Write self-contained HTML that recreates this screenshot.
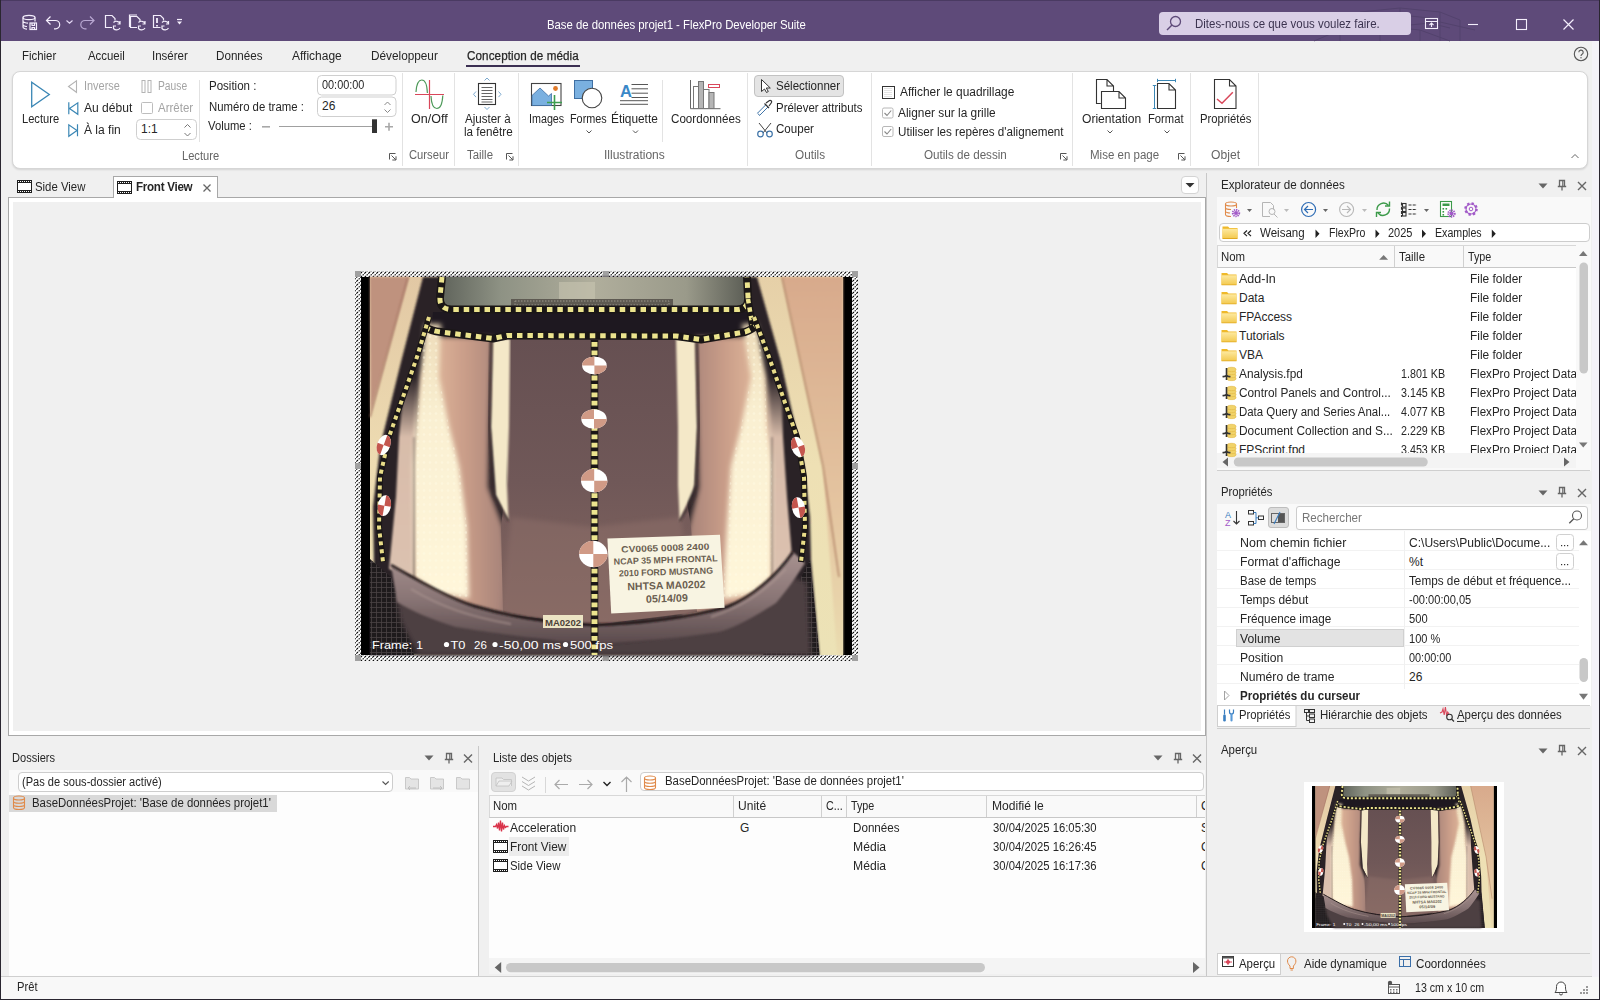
<!DOCTYPE html>
<html><head><meta charset="utf-8">
<style>
*{box-sizing:border-box;margin:0;padding:0}
html,body{width:1600px;height:1000px;overflow:hidden;background:#f0f0f0;font-family:"Liberation Sans",sans-serif;font-size:12px;color:#262626}
.a{position:absolute}
.t{position:absolute;white-space:nowrap;line-height:14px}
.g{color:#9a9a9a}
svg{position:absolute;overflow:visible}
</style></head><body>
<!-- window borders -->
<div class="a" style="left:0;top:0;width:1600px;height:41px;background:#5e4a79"></div>
<div class="a" style="left:0;top:0;width:1600px;height:1px;background:#4a3a62"></div>
<div class="a" style="left:0;top:0;width:1px;height:1000px;background:#2a2630"></div>
<div class="a" style="left:1599px;top:0;width:1px;height:1000px;background:#2a2630"></div>
<div class="a" style="left:0;top:999px;width:1600px;height:1px;background:#2a2630"></div>

<!-- TITLE BAR -->

<svg style="left:0;top:0" width="200" height="40">
 <g fill="none" stroke="#f4eefc" stroke-width="1.2">
  <!-- db save -->
  <ellipse cx="29" cy="17.5" rx="6" ry="2.2"/>
  <path d="M23 17.5v9.5c0 1.2 2.5 2.2 4 2.2M35 17.5v4M23 21c0 1.2 2.7 2.2 5 2.2M23 24.5c0 1.2 2.5 2 4 2"/>
  <rect x="30" y="23" width="6.5" height="6.5"/>
  <path d="M32 23v2.5h2.5V23M32 29.5v-2h2.5v2"/>
  <!-- undo -->
  <path d="M46.5 20.5h9a4.2 4.2 0 0 1 0 8.4h-1.5M50.5 16.5l-4 4 4 4"/>
  <path d="M66.5 20.5l3 2.6 3-2.6" stroke="#e4d8f4"/>
  <!-- redo -->
  <path d="M94 20.5h-9a4.2 4.2 0 0 0 0 8.4h1.5M90 16.5l4 4-4 4" stroke="#b9a8d2"/>
  <!-- sync docs -->
  <path d="M112 27.5h-6.5V15.5h6.5l3 3v2"/>
  <path d="M113.5 22.5a4 4 0 0 1 6.5 1M120 28a4 4 0 0 1-6.5 0.5M120 21v3h-2.5M113.5 29v-3h2.5"/>
  <path d="M137 27.5h-6.5V16.5h6.5l3 3v2M129.5 27v-12h7.5"/>
  <path d="M138.5 22.5a4 4 0 0 1 6.5 1M145 28a4 4 0 0 1-6.5 0.5M145 21v3h-2.5M138.5 29v-3h2.5"/>
  <path d="M160.5 27.5h-7V15.5h7l3 3v2"/>
  <path d="M157 18v5M157 25v1.5" stroke-width="1.8"/>
  <path d="M162 22.5a4 4 0 0 1 6.5 1M168.5 28a4 4 0 0 1-6.5 0.5M168.5 21v3h-2.5M162 29v-3h2.5"/>
  <path d="M177 19.5h5"/>
 </g>
 <path d="M177 21.5h5l-2.5 3z" fill="#f4eefc"/>
</svg>
<div class="t" style="left:547px;top:18px;color:#fff;font-size:12px;letter-spacing:-0.02px;transform:scaleX(0.947);transform-origin:0 0">Base de données projet1 - FlexPro Developer Suite</div>
<svg style="left:1300px;top:0" width="180" height="41"><g fill="none" stroke="#50406a" stroke-width="1" opacity="0.8">
 <path d="M14 41L40 30L80 26L120 30L150 41M40 30V41M80 26V41M120 30V41M60 12L100 8L140 12L160 20M100 8V26M140 12V41M160 20V41M100 26L140 22L175 30M125 22L150 28"/>
 <path d="M70 12V26M110 16L130 18"/></g></svg>
<div class="a" style="left:1159px;top:12px;width:252px;height:23px;background:#d9cfe6;border-radius:4px"></div>
<svg style="left:1159px;top:12px" width="252" height="23">
 <circle cx="16.5" cy="9.5" r="5" fill="none" stroke="#5e4a79" stroke-width="1.3"/>
 <path d="M13 13l-5 5" stroke="#5e4a79" stroke-width="1.5"/>
</svg>
<div class="t" style="left:1195px;top:17px;color:#3c3450;font-size:12px;transform:scaleX(0.955);transform-origin:0 0">Dites-nous ce que vous voulez faire.</div>
<svg style="left:1420px;top:10px" width="180" height="28">
 <g fill="none" stroke="#f4eefc" stroke-width="1.1">
  <rect x="5.5" y="8.5" width="12" height="10"/>
  <path d="M5.5 11.5h12M11.5 17v-4M9.5 15l2-2 2 2"/>
  <path d="M48 14.5h10"/>
  <rect x="96.5" y="9.5" width="10" height="10"/>
  <path d="M143.5 9.5l10 10M153.5 9.5l-10 10" stroke-width="1.2"/>
 </g>
</svg>


<!-- MENU -->

<div class="t" style="left:22px;top:49px;transform:scaleX(0.952);transform-origin:0 0">Fichier</div>
<div class="t" style="left:88px;top:49px;transform:scaleX(0.951);transform-origin:0 0">Accueil</div>
<div class="t" style="left:152px;top:49px;transform:scaleX(0.958);transform-origin:0 0">Insérer</div>
<div class="t" style="left:216px;top:49px;transform:scaleX(0.970);transform-origin:0 0">Données</div>
<div class="t" style="left:292px;top:49px;transform:scaleX(0.999);transform-origin:0 0">Affichage</div>
<div class="t" style="left:371px;top:49px;transform:scaleX(0.982);transform-origin:0 0">Développeur</div>
<div class="t" style="left:467px;top:49px;letter-spacing:0.1px;-webkit-text-stroke:0.25px #262626;transform:scaleX(0.970);transform-origin:0 0">Conception de média</div>
<div class="a" style="left:466px;top:65px;width:114px;height:2px;background:#3b2f52"></div>
<svg style="left:1570px;top:44px" width="24" height="22"><circle cx="11" cy="10" r="6.7" fill="none" stroke="#555" stroke-width="1.1"/><path d="M8.8 8.3a2.2 2.2 0 1 1 3.3 1.9c-0.8 0.5-1.1 0.9-1.1 1.8" fill="none" stroke="#555" stroke-width="1.1"/><circle cx="11" cy="13.8" r="0.7" fill="#555"/></svg>


<!-- RIBBON -->
<div class="a" style="left:12px;top:71px;width:1576px;height:98px;background:#fff;border:1px solid #d6d6d6;border-radius:8px;box-shadow:0 1px 2px rgba(0,0,0,0.12)"></div>

<!-- Lecture group -->
<svg style="left:0;top:72px" width="410" height="95">
 <path d="M31.7 10.3v24.4L49.3 22.5z" fill="none" stroke="#3b87b5" stroke-width="1.3" stroke-linejoin="miter"/>
 <path d="M76.5 8.8v11.5L68.5 14.5z" fill="none" stroke="#b4b4b4" stroke-width="1.1"/>
 <path d="M68.8 30.3v12M77.8 30.8v11.5L69.5 36.5z" fill="none" stroke="#3b87b5" stroke-width="1.2"/>
 <path d="M77.5 52.3v12M68.8 52.8v11.5L77 58.5z" fill="none" stroke="#3b87b5" stroke-width="1.2"/>
 <rect x="142" y="8.5" width="3" height="12" fill="none" stroke="#b4b4b4" stroke-width="1"/>
 <rect x="148" y="8.5" width="3" height="12" fill="none" stroke="#b4b4b4" stroke-width="1"/>
 <rect x="141.5" y="30.5" width="11" height="11" rx="1" fill="none" stroke="#bdbdbd" stroke-width="1"/>
 <rect x="136.5" y="47.5" width="60" height="20" rx="4" fill="#fff" stroke="#cfcfcf" stroke-width="1"/>
 <path d="M184.5 55.5l3-3 3 3M184.5 61l3 3 3-3" fill="none" stroke="#777" stroke-width="1"/>
 <path d="M199.5 8v62" stroke="#e2e2e2"/>
 <rect x="317.5" y="3.5" width="78.5" height="19.5" rx="4" fill="#fff" stroke="#cfcfcf" stroke-width="1"/>
 <rect x="317.5" y="25" width="78.5" height="19.5" rx="4" fill="#fff" stroke="#cfcfcf" stroke-width="1"/>
 <path d="M384.5 33l3-3 3 3M384.5 37.5l3 3 3-3" fill="none" stroke="#888" stroke-width="1"/>
 <path d="M262 54.8h8" stroke="#a8a8a8" stroke-width="1.6"/>
 <path d="M279 54.5h93" stroke="#a0a0a0" stroke-width="1"/>
 <rect x="372" y="47.3" width="5" height="13.7" fill="#333"/>
 <path d="M385 54.8h8M389 50.8v8" stroke="#a8a8a8" stroke-width="1.6"/>
 <path d="M389.5 87.5V81.5H395.5M391.5 83.5L395.8 87.8M396 84.3V88H392.3" fill="none" stroke="#555" stroke-width="1"/>
 <path d="M402.5 1v93" stroke="#e2e2e2"/>
</svg>
<div class="t" style="left:22px;top:112px;transform:scaleX(0.927);transform-origin:0 0">Lecture</div>
<div class="t g" style="left:84px;top:79px;color:#a4a4a4;transform:scaleX(0.910);transform-origin:0 0">Inverse</div>
<div class="t" style="left:84px;top:101px;transform:scaleX(1.005);transform-origin:0 0">Au début</div>
<div class="t" style="left:84px;top:123px;transform:scaleX(1.003);transform-origin:0 0">À la fin</div>
<div class="t" style="left:158px;top:79px;color:#a4a4a4;transform:scaleX(0.855);transform-origin:0 0">Pause</div>
<div class="t" style="left:158px;top:101px;color:#a4a4a4;transform:scaleX(0.957);transform-origin:0 0">Arrêter</div>
<div class="t" style="left:141px;top:122px">1:1</div>
<div class="t" style="left:209px;top:79px;transform:scaleX(0.960);transform-origin:0 0">Position :</div>
<div class="t" style="left:209px;top:100px;transform:scaleX(0.948);transform-origin:0 0">Numéro de trame :</div>
<div class="t" style="left:208px;top:119px;transform:scaleX(0.938);transform-origin:0 0">Volume :</div>
<div class="t" style="left:322px;top:78px;transform:scaleX(0.908);transform-origin:0 0">00:00:00</div>
<div class="t" style="left:322px;top:99px">26</div>
<div class="t" style="left:182px;top:149px;color:#666;transform:scaleX(0.927);transform-origin:0 0">Lecture</div>

<svg style="left:0;top:0" width="1600" height="170">
 <g stroke="#e3e3e3" stroke-width="1">
  <path d="M454.5 73v93M518.5 73v93M747.5 73v93M871.5 73v93M1072.5 73v93M1190.5 73v93M1258.5 73v93"/>
  <path d="M662.5 80v62"/>
 </g>
 <!-- On/Off -->
 <path d="M416 92c0.5-8 3-12 5.8-12s5.2 4 5.6 13M431 96c0.4 8 2.8 12.5 5.8 12.5s5.5-4 6-13" fill="none" stroke="#4e9a5a" stroke-width="1.2"/>
 <path d="M415 94.5h29M429.5 80v29" stroke="#d9475a" stroke-width="1.2"/>
 <!-- Ajuster -->
 <rect x="478.5" y="83.5" width="17" height="21" fill="#fff" stroke="#333" stroke-width="1.1"/>
 <path d="M481.5 87.5h11M481.5 90.5h11M481.5 93.5h11M481.5 96.5h11M481.5 99.5h11M481.5 102h11" stroke="#555" stroke-width="0.9"/>
 <path d="M484.5 80.5l2.5-2.5 2.5 2.5M484.5 107l2.5 2.5 2.5-2.5M476 91.5l-2.5 2.8 2.5 2.8M498.5 91.5l2.5 2.8-2.5 2.8" fill="none" stroke="#6d9fc8" stroke-width="0.9"/>
 <path d="M506.5 159.5V153.5H512.5M508.5 155.5L512.8 159.8M513 156.3V160H509.3" fill="none" stroke="#555" stroke-width="1"/>
 <!-- Images -->
 <rect x="531.5" y="83.5" width="29.5" height="22" fill="#fff" stroke="#444" stroke-width="1.1"/>
 <path d="M532 105.5v-10l8-7.5 8.5 8 3-2.5v12z" fill="#7ab0e0" stroke="#3f6fa3" stroke-width="0.8"/>
 <circle cx="555.5" cy="88.5" r="2.4" fill="#e07a2a"/>
 <path d="M554.5 95v15M547 102.5h15" stroke="#3e9e4f" stroke-width="1.6"/>
 <!-- Formes -->
 <rect x="574.5" y="80.5" width="18" height="18" fill="#7ab0e0" stroke="#3f6fa3" stroke-width="1"/>
 <circle cx="592" cy="98" r="9.8" fill="#fff" stroke="#444" stroke-width="1.1"/>
 <path d="M586.5 130.5l2.5 2.5 2.5-2.5M633 130.5l2.5 2.5 2.5-2.5M1107.5 130.5l2.5 2.5 2.5-2.5M1164.5 130.5l2.5 2.5 2.5-2.5" fill="none" stroke="#555" stroke-width="1"/>
 <!-- Etiquette -->
 <text x="620" y="96.5" font-family="Liberation Sans" font-size="16.5" font-weight="bold" fill="#3a88c8">A</text>
 <path d="M631.5 84.5h16.5M631.5 88.8h16.5M631.5 93.2h16.5M631.5 97.5h16.5M620 100.7h28M620 104.3h28" stroke="#444" stroke-width="0.9"/>
 <!-- Coordonnees -->
 <path d="M690.5 80v28.7h30" fill="none" stroke="#666" stroke-width="1"/>
 <rect x="693.5" y="86.5" width="5" height="22" fill="#fff" stroke="#777" stroke-width="1"/>
 <rect x="698.5" y="81.5" width="5" height="27" fill="#b5b5b5" stroke="#777" stroke-width="1"/>
 <rect x="703.5" y="89.5" width="5.5" height="19" fill="#fff" stroke="#777" stroke-width="1"/>
 <rect x="709" y="92.5" width="5" height="16" fill="#b5b5b5" stroke="#777" stroke-width="1"/>
 <rect x="708.5" y="84.5" width="11" height="3" fill="#fff" stroke="#d9475a" stroke-width="1"/>
 <!-- Selectionner -->
 <rect x="754.5" y="75.5" width="89" height="21" rx="3.5" fill="#e4e4e4" stroke="#c2c2c2" stroke-width="1"/>
 <path d="M761.5 79.5v12l3-2.5 2 3.5 1.8-1-2-3.5h4z" fill="#fff" stroke="#333" stroke-width="1" stroke-linejoin="round"/>
 <!-- pipette -->
 <path d="M758.5 114l1 1.5 8.5-8.5-2.2-2.2-8.3 8.4z" fill="#fff" stroke="#3f74a8" stroke-width="1"/>
 <path d="M764.5 103.5l4.5 4.5M766 103l3.5-2.5c1.2-0.6 2.6 0.6 2 2l-2.5 3.5" fill="none" stroke="#333" stroke-width="1.2"/>
 <!-- scissors -->
 <path d="M759 123l8 10M771 123l-8 10" stroke="#444" stroke-width="1"/>
 <circle cx="760.5" cy="134" r="2.8" fill="none" stroke="#3f74a8" stroke-width="1.2"/>
 <circle cx="769.5" cy="134" r="2.8" fill="none" stroke="#3f74a8" stroke-width="1.2"/>
 <!-- grid icon -->
 <rect x="882.5" y="86.5" width="12" height="12" fill="#fff" stroke="#333" stroke-width="1"/>
 <path d="M884.5 88.5h8M884.5 90.5h8M884.5 92.5h8M884.5 94.5h8M884.5 96.5h8" stroke="#bbb" stroke-width="0.8" stroke-dasharray="1 1"/>
 <rect x="882.5" y="108" width="10.5" height="10" rx="1.5" fill="#fff" stroke="#b8b8b8" stroke-width="1"/>
 <path d="M884.5 113l2.5 2.5 4.2-5" fill="none" stroke="#888" stroke-width="1.1"/>
 <rect x="882.5" y="126.5" width="10.5" height="10" rx="1.5" fill="#fff" stroke="#b8b8b8" stroke-width="1"/>
 <path d="M884.5 131.5l2.5 2.5 4.2-5" fill="none" stroke="#888" stroke-width="1.1"/>
 <path d="M1060.5 159.5V153.5H1066.5M1062.5 155.5L1066.8 159.8M1067 156.3V160H1063.3" fill="none" stroke="#555" stroke-width="1"/>
 <path d="M1178.5 159.5V153.5H1184.5M1180.5 155.5L1184.8 159.8M1185 156.3V160H1181.3" fill="none" stroke="#555" stroke-width="1"/>
 <!-- Orientation -->
 <path d="M1100.8 103.5h-4.3V79.5h10.5l6.5 6.5v5.5M1107 79.5v6.5h6.5" fill="none" stroke="#333" stroke-width="1.1"/>
 <path d="M1101.5 91.5h17.5l6.5 6.5v10.5h-24z M1119 91.5v6.5h6.5" fill="#fff" stroke="#333" stroke-width="1.1"/>
 <!-- Format -->
 <path d="M1157.5 83.5h11.5l6.5 6.5v18.5h-18z M1169 83.5v6.5h6.5" fill="#fff" stroke="#333" stroke-width="1.1"/>
 <path d="M1157 80.5h19M1157.5 78.8v3.4M1175.5 78.8v3.4M1154.5 85.5v23M1152.8 85.5h3.4M1152.8 108.5h3.4" fill="none" stroke="#3b87b5" stroke-width="1"/>
 <!-- Proprietes -->
 <path d="M1214.5 79.5h15l6.5 6.5v22.5h-21.5z M1229.5 79.5v6.5h6.5" fill="#fff" stroke="#333" stroke-width="1.1"/>
 <path d="M1217 99l5 4.3 10.8-11" fill="none" stroke="#d9475a" stroke-width="1.5"/>
 <path d="M1571.5 158l3.5-3.5 3.5 3.5" fill="none" stroke="#666" stroke-width="1"/>
</svg>
<div class="t" style="left:411px;top:112px;transform:scaleX(1.042);transform-origin:0 0">On/Off</div>
<div class="t" style="left:409px;top:148px;color:#666;transform:scaleX(0.935);transform-origin:0 0">Curseur</div>
<div class="t" style="left:465px;top:112px;transform:scaleX(0.963);transform-origin:0 0">Ajuster à</div>
<div class="t" style="left:464px;top:125px;transform:scaleX(0.973);transform-origin:0 0">la fenêtre</div>
<div class="t" style="left:467px;top:148px;color:#666;transform:scaleX(0.950);transform-origin:0 0">Taille</div>
<div class="t" style="left:529px;top:112px;transform:scaleX(0.894);transform-origin:0 0">Images</div>
<div class="t" style="left:570px;top:112px;transform:scaleX(0.902);transform-origin:0 0">Formes</div>
<div class="t" style="left:611px;top:112px;transform:scaleX(0.988);transform-origin:0 0">Étiquette</div>
<div class="t" style="left:671px;top:112px;transform:scaleX(0.969);transform-origin:0 0">Coordonnées</div>
<div class="t" style="left:604px;top:148px;color:#666;transform:scaleX(1.002);transform-origin:0 0">Illustrations</div>
<div class="t" style="left:776px;top:79px;transform:scaleX(0.961);transform-origin:0 0">Sélectionner</div>
<div class="t" style="left:776px;top:101px;transform:scaleX(0.953);transform-origin:0 0">Prélever attributs</div>
<div class="t" style="left:776px;top:122px;transform:scaleX(0.965);transform-origin:0 0">Couper</div>
<div class="t" style="left:795px;top:148px;color:#666;transform:scaleX(0.978);transform-origin:0 0">Outils</div>
<div class="t" style="left:900px;top:85px;transform:scaleX(0.992);transform-origin:0 0">Afficher le quadrillage</div>
<div class="t" style="left:898px;top:106px;transform:scaleX(0.989);transform-origin:0 0">Aligner sur la grille</div>
<div class="t" style="left:898px;top:125px;transform:scaleX(0.972);transform-origin:0 0">Utiliser les repères d'alignement</div>
<div class="t" style="left:924px;top:148px;color:#666;transform:scaleX(0.970);transform-origin:0 0">Outils de dessin</div>
<div class="t" style="left:1082px;top:112px;transform:scaleX(1.007);transform-origin:0 0">Orientation</div>
<div class="t" style="left:1148px;top:112px;transform:scaleX(0.934);transform-origin:0 0">Format</div>
<div class="t" style="left:1090px;top:148px;color:#666;transform:scaleX(0.959);transform-origin:0 0">Mise en page</div>
<div class="t" style="left:1200px;top:112px;transform:scaleX(0.940);transform-origin:0 0">Propriétés</div>
<div class="t" style="left:1211px;top:148px;color:#666;transform:scaleX(1.011);transform-origin:0 0">Objet</div>


<!-- DOC TABS + AREA -->

<!-- tab strip -->
<div class="a" style="left:8px;top:197px;width:1198px;height:539px;background:#f0f0f0;border:1px solid #a8a8a8"></div>
<div class="a" style="left:9px;top:198px;width:1196px;height:537px;border:4px solid #fff"></div>
<div class="a" style="left:113px;top:176px;width:105px;height:22px;background:#fff;border:1px solid #a8a8a8;border-bottom:none"></div>
<svg style="left:0;top:170px" width="240" height="30">
 <g><use href="#film" x="17" y="10"/><use href="#film" x="117" y="11"/></g>
 <path d="M203.5 14.5l7 7M210.5 14.5l-7 7" stroke="#666" stroke-width="1.3"/>
</svg>
<div class="t" style="left:35px;top:180px;transform:scaleX(0.948);transform-origin:0 0">Side View</div>
<div class="t" style="left:136px;top:180px;font-weight:bold;letter-spacing:-0.3px;transform:scaleX(0.969);transform-origin:0 0">Front View</div>
<div class="a" style="left:1181px;top:176px;width:18px;height:18px;background:#fff;border:1px solid #d4d4d4;border-radius:4px"></div>
<svg style="left:1181px;top:176px" width="18" height="18"><path d="M4.5 7h9l-4.5 4.5z" fill="#333"/></svg>
<div class="a" style="left:1206px;top:173px;width:1px;height:804px;background:#c8c8c8"></div>

<!-- selection frame -->
<svg style="left:355px;top:271px" width="504" height="391">
 <defs>
  <pattern id="hatch" patternUnits="userSpaceOnUse" width="4" height="4">
   <rect width="4" height="4" fill="#fff"/>
   <path d="M-1 5L5 -1M3 5L5 3M-1 1L1 -1" stroke="#000" stroke-width="1.1" stroke-dasharray="2.4 0.9"/>
  </pattern>
 </defs>
 <rect x="0" y="0" width="503" height="390" fill="url(#hatch)"/>
 <g fill="#a0a0a0">
  <rect x="0" y="0" width="6" height="6"/><rect x="248" y="0" width="6" height="6"/><rect x="497" y="0" width="6" height="6"/>
  <rect x="0" y="192" width="6" height="6"/><rect x="497" y="192" width="6" height="6"/>
  <rect x="0" y="384" width="6" height="6"/><rect x="248" y="384" width="6" height="6"/><rect x="497" y="384" width="6" height="6"/>
 </g>
</svg>
<svg style="left:361px;top:277px" width="491" height="378" viewBox="361 277 491 378">
  <defs>
  <linearGradient id="flL" x1="0" y1="0" x2="0" y2="1"><stop offset="0" stop-color="#e2c8a4"/><stop offset="0.5" stop-color="#eedcb2"/><stop offset="1" stop-color="#f0e4b6"/></linearGradient>
  <linearGradient id="flR" x1="0" y1="0" x2="0" y2="1"><stop offset="0" stop-color="#e6d0a8"/><stop offset="0.5" stop-color="#eee0b4"/><stop offset="1" stop-color="#ece2b6"/></linearGradient>
  <linearGradient id="flRp" x1="0" y1="0" x2="0" y2="1"><stop offset="0" stop-color="#d8aa8c"/><stop offset="0.6" stop-color="#e4c4a0"/><stop offset="1" stop-color="#eadcb0"/></linearGradient>
  <linearGradient id="ws" x1="0" y1="0" x2="1" y2="0"><stop offset="0" stop-color="#5e625a"/><stop offset="0.2" stop-color="#8e9284"/><stop offset="0.5" stop-color="#b0ae9c"/><stop offset="0.8" stop-color="#9a9a8a"/><stop offset="1" stop-color="#5a5c54"/></linearGradient>
  <linearGradient id="hood" x1="0" y1="0" x2="0" y2="1"><stop offset="0" stop-color="#665052"/><stop offset="0.5" stop-color="#705858"/><stop offset="1" stop-color="#846660"/></linearGradient>
  <linearGradient id="pkL" x1="0" y1="0" x2="1" y2="0"><stop offset="0" stop-color="#ecc4a4"/><stop offset="0.55" stop-color="#c89c88"/><stop offset="1" stop-color="#a07e76"/></linearGradient>
  <linearGradient id="pkR" x1="1" y1="0" x2="0" y2="0"><stop offset="0" stop-color="#ecc4a4"/><stop offset="0.55" stop-color="#c89c88"/><stop offset="1" stop-color="#a07e76"/></linearGradient>
  <linearGradient id="brt" x1="0" y1="0" x2="0" y2="1"><stop offset="0" stop-color="#eedcba"/><stop offset="0.35" stop-color="#faf0d2"/><stop offset="1" stop-color="#fff6da"/></linearGradient>
  <linearGradient id="bsurf" x1="0" y1="0" x2="0" y2="1"><stop offset="0" stop-color="#a89290"/><stop offset="0.5" stop-color="#8a7676"/><stop offset="1" stop-color="#5a4a4c"/></linearGradient>
  <filter id="soft" x="-5%" y="-5%" width="110%" height="110%"><feGaussianBlur stdDeviation="1.1"/></filter>
  <filter id="soft2" x="-10%" y="-10%" width="120%" height="120%"><feGaussianBlur stdDeviation="2.6"/></filter>
  <pattern id="tapeH" patternUnits="userSpaceOnUse" width="10.5" height="10"><rect width="10.5" height="10" fill="#1c1818"/><rect x="2" y="0" width="5.5" height="10" fill="#eee690"/></pattern>
  <pattern id="tapeV" patternUnits="userSpaceOnUse" width="10" height="8.5"><rect width="10" height="8.5" fill="#1c1818"/><rect x="0" y="1.5" width="10" height="4.5" fill="#eee690"/></pattern>
  <pattern id="tapeD" patternUnits="userSpaceOnUse" width="8" height="8"><rect width="8" height="8" fill="#1c1818"/><rect x="1" y="1" width="4" height="4" fill="#e8dc88"/></pattern>
  <pattern id="dots" patternUnits="userSpaceOnUse" width="6" height="7"><circle cx="3" cy="3.5" r="1.3" fill="#fffbe6" opacity="0.9"/></pattern>
  <pattern id="grate" patternUnits="userSpaceOnUse" width="5" height="5"><rect width="5" height="5" fill="#1e1a1c"/><path d="M0 0.5H5M0.5 0V5" stroke="#4a4244" stroke-width="0.8"/></pattern>
 </defs>
 <g id="photo" transform="translate(361 277)">
  <rect x="0" y="0" width="491" height="378" fill="#000"/>
  <!-- floor -->
  <rect x="9" y="0" width="240" height="378" fill="url(#flL)"/>
  <rect x="245" y="0" width="237" height="378" fill="url(#flR)"/>
  <path d="M9 0H48L9.5 135z" fill="#bf927e" filter="url(#soft)"/>
  <path d="M47 0L9 140" stroke="#a06e5e" stroke-width="1.3" fill="none" filter="url(#soft)"/>
  <path d="M421 0H482V378H476L462 189z" fill="url(#flRp)" filter="url(#soft)"/>
  <path d="M421 0L462 189L478 300" stroke="#b08266" stroke-width="1.4" fill="none" filter="url(#soft)"/>
  <!-- car silhouette dark -->
  <path d="M62 0L40 85L19 170L12 230L13 290L9 300V378H458.5L450 283L449 240L443 189L420 85L396 0z" fill="#2a2026" filter="url(#soft)"/>
  <!-- grating -->
  <path d="M9 282L30 300L40 330L53 378H9z" fill="url(#grate)"/>
  <path d="M449 283L458.5 378H402L425 330z" fill="url(#grate)"/>
  <!-- windshield -->
  <path d="M80 0H386L387 30H78z" fill="url(#ws)"/>
  <rect x="198" y="5" width="36" height="20" fill="#c8c4b0" opacity="0.6"/>
  <path d="M150 22H312V30H150z" fill="#5e5a52"/>
  <path d="M154 24H308V28H154z" fill="none" stroke="#9a968a" stroke-width="1" stroke-dasharray="1.5 1.5"/>
  <!-- cowl -->
  <path d="M72 35H392L394 57H70z" fill="#1e1820"/>
  <!-- pink areas -->
  <path d="M70 60H131L128 150L127 210L142 250L150 340L76 320L52 300L52 189L60 100z" fill="url(#pkL)" filter="url(#soft2)"/>
  <path d="M392 60H334L337 150L338 210L328 250L320 345L390 322L414 300L414 189L404 100z" fill="url(#pkR)" filter="url(#soft2)"/>
  <!-- hood center -->
  <path d="M146 62H320L322 200L330 250L336 335L233 348L142 337L140 250L146 200z" fill="url(#hood)"/>
  <path d="M150 240L230 250L320 240L330 340L233 348L140 337z" fill="#8e706a" opacity="0.5" filter="url(#soft2)"/>
  <!-- outer pinkish-gray side surfaces (lower) -->
  <linearGradient id="sideg" x1="0" y1="0" x2="0" y2="1"><stop offset="0" stop-color="#d8bcaa" stop-opacity="0"/><stop offset="0.3" stop-color="#d8bcaa"/><stop offset="1" stop-color="#dcc2b0"/></linearGradient><path d="M44 100L56 100L53 300L28 292L35 220L38 160z" fill="url(#sideg)" filter="url(#soft)"/>
  <path d="M420 100L406 100L411 300L432 292L426 220L422 160z" fill="url(#sideg)" filter="url(#soft)"/>
  <!-- bright panels -->
  <path d="M64 47L80 47L78 100L88 150L98 189L106 250L108 321L76 316L54 300L52 189L55 150L60 100z" fill="url(#brt)" filter="url(#soft2)"/>
  <path d="M64 47L80 47L78 100L88 150L98 189L106 250L108 321L76 316L54 300L52 189L55 150L60 100z" fill="url(#dots)" opacity="0.5"/>
  <path d="M396 47L381 47L390 100L380 150L370 189L366 250L362 322L392 316L410 300L411 189L406 150L404 100z" fill="url(#brt)" filter="url(#soft2)"/>
  <path d="M396 47L381 47L390 100L380 150L370 189L366 250L362 322L392 316L410 300L411 189L406 150L404 100z" fill="url(#dots)" opacity="0.5"/>
  <path d="M53 160V300M411 160V300" stroke="#3a2c2e" stroke-width="1" opacity="0.7" filter="url(#soft)"/>
  <!-- scoop stripes -->
  <path d="M132 62H149L148 150L146 208L147.5 244L135 218L130 150z" fill="#f4e8c8" filter="url(#soft)"/>
  <path d="M130 62L128 150L132 218L147.5 244" stroke="#3e2e30" stroke-width="2" fill="none" filter="url(#soft)"/>
  <path d="M315 62H334L336 150L334 208L318.7 244L317 208L317 150z" fill="#f4e8c8" filter="url(#soft)"/>
  <path d="M336 62L338 150L334 218L318.7 244" stroke="#3e2e30" stroke-width="2" fill="none" filter="url(#soft)"/>
  <!-- lower bumper -->
  <path d="M34 318C80 345 160 362 233 366C310 362 385 345 430 300L446 305L450 378H58L40 345z" fill="#4e4042" filter="url(#soft2)"/>
  <!-- bumper surface -->
  <path d="M30 288C60 305 90 322 113 329C150 340 190 346 233 348C280 347 330 340 366 330C390 320 415 300 432 275L444 286C432 305 422 318 415 326C390 342 370 352 358 355C320 361 280 364 245 367C220 367 200 365 189 363C150 359 120 354 94.5 350C70 342 50 334 36 325z" fill="url(#bsurf)" filter="url(#soft)"/>
  <path d="M30 288C60 305 90 322 113 329C150 340 190 346 233 348C280 347 330 340 366 330C390 320 415 300 432 275" stroke="#1e1618" stroke-width="2.5" fill="none" filter="url(#soft)"/>
  <path d="M50 312C80 330 110 340 150 347" stroke="#b09a94" stroke-width="2" fill="none" opacity="0.6" filter="url(#soft)"/>
  <path d="M425 292C400 318 380 330 350 340" stroke="#b09a94" stroke-width="2" fill="none" opacity="0.6" filter="url(#soft)"/>
  <!-- tapes -->
  <g fill="none" stroke-linejoin="round">
   <path d="M81 0L79 20Q78 32 90 32.5L376 32.5Q388 32 387 20L386 0" stroke="#1a1616" stroke-width="8"/>
   <path d="M81 0L79 20Q78 32 90 32.5L376 32.5Q388 32 387 20L386 0" stroke="#ece48e" stroke-width="5" stroke-dasharray="5.5 4.9"/>
   <path d="M387 22L390 40L392 52" stroke="#1a1616" stroke-width="7"/>
   <path d="M387 22L390 40L392 52" stroke="#ece48e" stroke-width="4.5" stroke-dasharray="4.5 4"/>
   <path d="M64 50Q70 54 80 55L132 61.5L146 58.5L315 59L340 62.5L384 55Q392 52 396 48" stroke="#1a1616" stroke-width="8"/>
   <path d="M64 50Q70 54 80 55L132 61.5L146 58.5L315 59L340 62.5L384 55Q392 52 396 48" stroke="#ece48e" stroke-width="5" stroke-dasharray="5.5 4.9"/>
   <path d="M233.5 63V378" stroke="#1a1616" stroke-width="7.5"/>
   <path d="M233.5 65V378" stroke="#ece48e" stroke-width="6" stroke-dasharray="4.8 3.6"/>
   <path d="M68 40L56 80L42 120L28 160L19 200L18 250L22 285" stroke="#1a1616" stroke-width="6"/>
   <path d="M68 40L56 80L42 120L28 160L19 200L18 250L22 285" stroke="#e8dc88" stroke-width="4" stroke-dasharray="4 4"/>
   <path d="M393 40L408 80L422 120L436 160L443 200L444 250L440 285" stroke="#1a1616" stroke-width="6"/>
   <path d="M393 40L408 80L422 120L436 160L443 200L444 250L440 285" stroke="#e8dc88" stroke-width="4" stroke-dasharray="4 4"/>
  </g>
  <!-- targets -->
  <g>
   <ellipse cx="233.4" cy="88.4" rx="12.3" ry="9" fill="#fff"/><path d="M233.4 88.4V79.4A12.3 9 0 0 0 221.1 88.4zM233.4 88.4V97.4A12.3 9 0 0 0 245.7 88.4z" fill="#d09a86"/>
   <ellipse cx="233" cy="142" rx="12.7" ry="9.8" fill="#fff"/><path d="M233 142V132.2A12.7 9.8 0 0 0 220.3 142zM233 142V151.8A12.7 9.8 0 0 0 245.7 142z" fill="#d09a86"/>
   <ellipse cx="233.2" cy="203.7" rx="13.2" ry="11.7" fill="#fff"/><path d="M233.2 203.7V192A13.2 11.7 0 0 0 220 203.7zM233.2 203.7V215.4A13.2 11.7 0 0 0 246.4 203.7z" fill="#d09a86"/>
   <ellipse cx="232.3" cy="277" rx="14.2" ry="13.2" fill="#fff"/><path d="M232.3 277V263.8A14.2 13.2 0 0 0 218.1 277zM232.3 277V290.2A14.2 13.2 0 0 0 246.5 277z" fill="#d09a86"/>
   <ellipse cx="22.7" cy="168" rx="6.5" ry="10.5" fill="#fff" transform="rotate(20 22.7 168)"/><path d="M22.7 168V157.5A6.5 10.5 0 0 1 29.2 168zM22.7 168V178.5A6.5 10.5 0 0 1 16.2 168z" fill="#c4564e" transform="rotate(20 22.7 168)"/>
   <ellipse cx="23.4" cy="228.7" rx="6.5" ry="10.5" fill="#fff" transform="rotate(10 23.4 228.7)"/><path d="M23.4 228.7V218.2A6.5 10.5 0 0 1 29.9 228.7zM23.4 228.7V239.2A6.5 10.5 0 0 1 16.9 228.7z" fill="#c4564e" transform="rotate(10 23.4 228.7)"/>
   <ellipse cx="437" cy="170" rx="6.5" ry="10.5" fill="#fff" transform="rotate(-20 437 170)"/><path d="M437 170V159.5A6.5 10.5 0 0 0 430.5 170zM437 170V180.5A6.5 10.5 0 0 0 443.5 170z" fill="#c4564e" transform="rotate(-20 437 170)"/>
   <ellipse cx="437.5" cy="230.6" rx="6.5" ry="10.5" fill="#fff" transform="rotate(-10 437.5 230.6)"/><path d="M437.5 230.6V220.1A6.5 10.5 0 0 0 431 230.6zM437.5 230.6V241.1A6.5 10.5 0 0 0 444 230.6z" fill="#c4564e" transform="rotate(-10 437.5 230.6)"/>
  </g>
  <!-- sign -->
  <path d="M246.4 261.6L359 257.8L363.6 330.7L250.2 336.4z" fill="#f8f4e2"/>
  <g font-family="Liberation Sans" font-size="9" fill="#6a5e50" text-anchor="middle" transform="rotate(-1.8 305 295)">
   <text x="305" y="274" textLength="88" lengthAdjust="spacingAndGlyphs" font-weight="bold">CV0065 0008 2400</text>
   <text x="305" y="286" textLength="104" lengthAdjust="spacingAndGlyphs" font-weight="bold">NCAP 35 MPH FRONTAL</text>
   <text x="305" y="298" textLength="94" lengthAdjust="spacingAndGlyphs" font-weight="bold">2010 FORD MUSTANG</text>
   <text x="305" y="312" font-size="10.5" textLength="78" lengthAdjust="spacingAndGlyphs" font-weight="bold">NHTSA MA0202</text>
   <text x="305" y="325" font-size="10.5" textLength="42" lengthAdjust="spacingAndGlyphs" font-weight="bold">05/14/09</text>
  </g>
  <rect x="182" y="338" width="40" height="13" fill="#ece4c4"/>
  <text x="202" y="348.5" font-family="Liberation Sans" font-weight="bold" font-size="9.5" fill="#4a4038" text-anchor="middle" textLength="36" lengthAdjust="spacingAndGlyphs">MA0202</text>
  <!-- overlay -->
  <g font-family="Liberation Sans" font-size="11.5" fill="#fff">
   <text x="11" y="371.5" textLength="51" lengthAdjust="spacingAndGlyphs">Frame: 1</text>
   <circle cx="85.5" cy="367.5" r="2.6"/><text x="89.5" y="371.5" textLength="15" lengthAdjust="spacingAndGlyphs">T0</text>
   <text x="113" y="371.5">26</text>
   <circle cx="134" cy="367.5" r="2.6"/><text x="138" y="371.5" textLength="62" lengthAdjust="spacingAndGlyphs">-50,00 ms</text>
   <circle cx="204.5" cy="367.5" r="2.6"/><text x="209" y="371.5" textLength="43" lengthAdjust="spacingAndGlyphs">500 fps</text>
  </g>
 </g>

</svg>


<!-- RIGHT PANELS -->

<svg style="left:0;top:0" width="0" height="0">
 <defs>
  <linearGradient id="fold" x1="0" y1="0" x2="0" y2="1"><stop offset="0" stop-color="#fde9a0"/><stop offset="1" stop-color="#f3c94e"/></linearGradient>
  <symbol id="folder" viewBox="0 0 16 14" width="16" height="14">
   <path d="M0.5 1.5h5.5l1.5 1.5h8v10h-15z" fill="#efb92a"/>
   <rect x="0.5" y="3.8" width="15" height="9.7" fill="url(#fold)"/>
   <path d="M0.5 13.5h15" stroke="#e0a820" stroke-width="1"/>
  </symbol>
  <symbol id="fpd" viewBox="0 0 16 16" width="16" height="16">
   <g fill="#f1d36a" stroke="#e0b640" stroke-width="0.6">
    <ellipse cx="10.5" cy="13" rx="4.5" ry="2.2"/>
    <ellipse cx="10.5" cy="10" rx="4.5" ry="2.2"/>
    <ellipse cx="10.5" cy="7" rx="4.5" ry="2.2"/>
    <ellipse cx="10.5" cy="4" rx="4.5" ry="2.2"/>
   </g>
   <path d="M5.5 2.5v12M1.5 11c2 0.3 3 0 4-1.2c1 1.2 2 1.5 4 1.2" fill="none" stroke="#333" stroke-width="1.6"/>
  </symbol>
  <symbol id="film" viewBox="0 0 15 13" width="15" height="13">
   <rect x="0" y="0" width="15" height="13" fill="#1e1e1e"/><rect x="1" y="3" width="13" height="7" fill="#fff"/><rect x="1" y="1" width="1" height="1" fill="#fff"/><rect x="1" y="11" width="1" height="1" fill="#fff"/><rect x="3" y="1" width="1" height="1" fill="#fff"/><rect x="3" y="11" width="1" height="1" fill="#fff"/><rect x="5" y="1" width="1" height="1" fill="#fff"/><rect x="5" y="11" width="1" height="1" fill="#fff"/><rect x="7" y="1" width="1" height="1" fill="#fff"/><rect x="7" y="11" width="1" height="1" fill="#fff"/><rect x="9" y="1" width="1" height="1" fill="#fff"/><rect x="9" y="11" width="1" height="1" fill="#fff"/><rect x="11" y="1" width="1" height="1" fill="#fff"/><rect x="11" y="11" width="1" height="1" fill="#fff"/><rect x="13" y="1" width="1" height="1" fill="#fff"/><rect x="13" y="11" width="1" height="1" fill="#fff"/>
  </symbol>
  <symbol id="pin" viewBox="0 0 12 12" width="12" height="12">
   <path d="M3.5 1.5h5v6h-5zM1.8 7.5h8.4M6 7.5v4" fill="none" stroke="#666" stroke-width="1.3"/>
   <path d="M6.8 1.8v5.5" stroke="#666" stroke-width="1.2"/>
  </symbol>
  <symbol id="pclose" viewBox="0 0 12 12" width="12" height="12">
   <path d="M2 2l8 8M10 2l-8 8" stroke="#666" stroke-width="1.4"/>
  </symbol>
  <symbol id="pdrop" viewBox="0 0 12 12" width="12" height="12">
   <path d="M1.5 3.5h9l-4.5 5z" fill="#666"/>
  </symbol>
 </defs>
</svg>
<!-- right strip -->
<div class="a" style="left:1592px;top:41px;width:7px;height:936px;background:#f4f2f8"></div>

<!-- Explorateur -->
<div class="t" style="left:1221px;top:178px;transform:scaleX(0.971);transform-origin:0 0">Explorateur de données</div>
<svg style="left:1535px;top:178px" width="60" height="16">
 <use href="#pdrop" x="2" y="2"/><use href="#pin" x="21" y="1"/><use href="#pclose" x="41" y="2"/>
</svg>
<div class="a" style="left:1217px;top:197px;width:374px;height:274px;background:#f9f9f9"></div>
<div class="a" style="left:1219px;top:223px;width:371px;height:19px;background:#fff;border:1px solid #cdcdcd;border-radius:4px"></div>
<div class="a" style="left:1217px;top:245px;width:359px;height:208px;background:#fff"></div>
<div class="a" style="left:1217px;top:245px;width:359px;height:23px;background:#f9f9f9;border-top:1px solid #d8d8d8;border-bottom:1px solid #c8c8c8;border-left:1px solid #d8d8d8"></div>
<svg style="left:0;top:0" width="1600" height="480">
 <!-- toolbar icons -->
 <g fill="none" stroke="#e08a4a" stroke-width="1.1">
  <ellipse cx="1231" cy="204" rx="5.5" ry="2"/>
  <path d="M1225.5 204v10.5c0 1.1 2.5 2 5.5 2M1236.5 204v4M1225.5 207.5c0 1.1 2.5 2 5.5 2M1225.5 211c0 1.1 2.5 2 4.5 2"/>
 </g>
 <circle cx="1236" cy="213" r="3.2" fill="none" stroke="#a25ac8" stroke-width="2" stroke-dasharray="1.3 0.8"/>
 <circle cx="1236" cy="213" r="2" fill="#a25ac8"/>
 <path d="M1247 209h5l-2.5 3z" fill="#666"/>
 <g fill="none" stroke="#b5b5b5" stroke-width="1">
  <path d="M1270 216.5h-7.5v-14h8l3 3v4"/><circle cx="1272" cy="211.5" r="3"/><path d="M1274 214l3.5 3.5"/>
 </g>
 <path d="M1284 209h5l-2.5 3z" fill="#bbb"/>
 <circle cx="1308.6" cy="209.5" r="7" fill="none" stroke="#2f6db5" stroke-width="1.2"/>
 <path d="M1313 209.5h-8.5M1308 206l-3.5 3.5 3.5 3.5" fill="none" stroke="#2f6db5" stroke-width="1.2"/>
 <path d="M1323 209h5l-2.5 3z" fill="#666"/>
 <circle cx="1346.6" cy="209.5" r="7" fill="none" stroke="#b8b8b8" stroke-width="1.1"/>
 <path d="M1342 209.5h8.5M1347 206l3.5 3.5-3.5 3.5" fill="none" stroke="#b8b8b8" stroke-width="1.1"/>
 <path d="M1362 209h5l-2.5 3z" fill="#bbb"/>
 <g fill="none" stroke="#3c9a4a" stroke-width="1.4">
  <path d="M1377 210a6.5 6.5 0 0 1 11.5-4.5M1389.5 208.5a6.5 6.5 0 0 1-11.5 4.5"/>
  <path d="M1389.5 201.5v4.5h-4.5M1376.5 217v-4.5h4.5"/>
 </g>
 <g fill="none" stroke="#333" stroke-width="1.1">
  <rect x="1402.5" y="203.5" width="3.5" height="3.5"/><rect x="1402.5" y="208" width="3.5" height="3.5"/><rect x="1402.5" y="212.5" width="3.5" height="3.5"/>
  <path d="M1401.5 202.5v14.5M1408.5 205h8.5M1408.5 209.5h8.5M1408.5 214h8.5" stroke-dasharray="3 1.2"/>
 </g>
 <path d="M1424 209h5l-2.5 3z" fill="#666"/>
 <rect x="1440.5" y="201.5" width="11" height="15" fill="#fff" stroke="#3c9a4a" stroke-width="1.1"/>
 <rect x="1442.5" y="203.5" width="7" height="2.5" fill="#3c9a4a"/>
 <g fill="#3c9a4a"><rect x="1442.5" y="208" width="1.6" height="1.6"/><rect x="1445.5" y="208" width="1.6" height="1.6"/><rect x="1442.5" y="211" width="1.6" height="1.6"/><rect x="1442.5" y="214" width="1.6" height="1.6"/></g>
 <circle cx="1451.5" cy="213.5" r="3.2" fill="none" stroke="#a25ac8" stroke-width="2" stroke-dasharray="1.3 0.8"/>
 <circle cx="1451.5" cy="213.5" r="2" fill="#a25ac8"/>
 <circle cx="1471" cy="209" r="5.5" fill="none" stroke="#a25ac8" stroke-width="2.6" stroke-dasharray="2.2 2.1"/>
 <circle cx="1471" cy="209" r="5" fill="none" stroke="#a25ac8" stroke-width="1.1"/>
 <circle cx="1471" cy="209" r="1.8" fill="none" stroke="#a25ac8" stroke-width="1"/>
 <!-- breadcrumb -->
 <use href="#folder" x="1222" y="225"/>
 <path d="M1247 230.5l-3 2.8 3 2.8M1251 230.5l-3 2.8 3 2.8" fill="none" stroke="#222" stroke-width="1.2"/>
 <path d="M1315.5 229.5v8.5l4-4.25zM1375.5 229.5v8.5l4-4.25zM1422 229.5v8.5l4-4.25zM1491.8 229.5v8.5l4-4.25z" fill="#222"/>
 <!-- header -->
 <path d="M1379.2 259.7l4.45-4.7 4.45 4.7z" fill="#777"/>
 <path d="M1394.5 246v21M1463.5 246v21" stroke="#d0d0d0" stroke-width="1"/>
 <!-- scroll -->
 <path d="M1579 256h8.5l-4.25-5z" fill="#777"/>
 <rect x="1579.5" y="262.5" width="8.5" height="111" rx="4.2" fill="#c8c8c8"/>
 <path d="M1579 442.5h8.5l-4.25 5z" fill="#777"/>
 <rect x="1217" y="453" width="359" height="15" fill="#f4f4f4"/>
 <path d="M1228 457.5v9l-5.5-4.5z" fill="#666"/>
 <rect x="1233.75" y="457.5" width="194" height="9" rx="4.5" fill="#c8c8c8"/>
 <path d="M1564 457.5v9l5.5-4.5z" fill="#666"/>
 <path d="M1217 470.5h373" stroke="#cfcfcf" stroke-width="1"/>
 <use href="#folder" x="1221" y="271.5"/><use href="#folder" x="1221" y="290.5"/><use href="#folder" x="1221" y="309.5"/><use href="#folder" x="1221" y="328.5"/><use href="#folder" x="1221" y="347.5"/><use href="#fpd" x="1221" y="365.5"/><use href="#fpd" x="1221" y="384.5"/><use href="#fpd" x="1221" y="403.5"/><use href="#fpd" x="1221" y="422.5"/><use href="#fpd" x="1221" y="441.5"/>
</svg>
<div class="t" style="left:1243px;top:226px">&nbsp;</div>
<div class="t" style="left:1260px;top:226px;transform:scaleX(0.962);transform-origin:0 0">Weisang</div>
<div class="t" style="left:1329px;top:226px;transform:scaleX(0.880);transform-origin:0 0">FlexPro</div>
<div class="t" style="left:1388px;top:226px;transform:scaleX(0.917);transform-origin:0 0">2025</div>
<div class="t" style="left:1435px;top:226px;transform:scaleX(0.886);transform-origin:0 0">Examples</div>
<div class="t" style="left:1221px;top:250px;transform:scaleX(0.951);transform-origin:0 0">Nom</div>
<div class="t" style="left:1399px;top:250px;transform:scaleX(0.950);transform-origin:0 0">Taille</div>
<div class="t" style="left:1468px;top:250px;transform:scaleX(0.896);transform-origin:0 0">Type</div>
<div class="a" style="left:1217px;top:269px;width:359px;height:184px;overflow:hidden">
 <div class="a" style="left:-1217px;top:-269px;width:1600px;height:500px"><div class="t" style="left:1239px;top:271.5px;transform:scaleX(1.041);transform-origin:0 0">Add-In</div><div class="t" style="left:1470px;top:271.5px;transform:scaleX(0.993);transform-origin:0 0">File folder</div><div class="t" style="left:1239px;top:290.5px">Data</div><div class="t" style="left:1470px;top:290.5px;transform:scaleX(0.993);transform-origin:0 0">File folder</div><div class="t" style="left:1239px;top:309.5px">FPAccess</div><div class="t" style="left:1470px;top:309.5px;transform:scaleX(0.993);transform-origin:0 0">File folder</div><div class="t" style="left:1239px;top:328.5px">Tutorials</div><div class="t" style="left:1470px;top:328.5px;transform:scaleX(0.993);transform-origin:0 0">File folder</div><div class="t" style="left:1239px;top:347.5px">VBA</div><div class="t" style="left:1470px;top:347.5px;transform:scaleX(0.993);transform-origin:0 0">File folder</div><div class="t" style="left:1239px;top:366.5px;transform:scaleX(0.986);transform-origin:0 0">Analysis.fpd</div><div class="t" style="left:1401px;top:366.5px;transform:scaleX(0.893);transform-origin:0 0">1.801 KB</div><div class="t" style="left:1470px;top:366.5px;transform:scaleX(0.965);transform-origin:0 0">FlexPro Project Data</div><div class="t" style="left:1239px;top:385.5px;transform:scaleX(0.985);transform-origin:0 0">Control Panels and Control...</div><div class="t" style="left:1401px;top:385.5px;transform:scaleX(0.893);transform-origin:0 0">3.145 KB</div><div class="t" style="left:1470px;top:385.5px;transform:scaleX(0.965);transform-origin:0 0">FlexPro Project Data</div><div class="t" style="left:1239px;top:404.5px;transform:scaleX(0.953);transform-origin:0 0">Data Query and Series Anal...</div><div class="t" style="left:1401px;top:404.5px;transform:scaleX(0.893);transform-origin:0 0">4.077 KB</div><div class="t" style="left:1470px;top:404.5px;transform:scaleX(0.965);transform-origin:0 0">FlexPro Project Data</div><div class="t" style="left:1239px;top:423.5px;transform:scaleX(0.990);transform-origin:0 0">Document Collection and S...</div><div class="t" style="left:1401px;top:423.5px;transform:scaleX(0.893);transform-origin:0 0">2.229 KB</div><div class="t" style="left:1470px;top:423.5px;transform:scaleX(0.965);transform-origin:0 0">FlexPro Project Data</div><div class="t" style="left:1239px;top:442.5px">FPScript.fpd</div><div class="t" style="left:1401px;top:442.5px;transform:scaleX(0.893);transform-origin:0 0">3.453 KB</div><div class="t" style="left:1470px;top:442.5px;transform:scaleX(0.965);transform-origin:0 0">FlexPro Project Data</div></div>
</div>

<!-- Proprietes -->
<div class="t" style="left:1221px;top:485px;transform:scaleX(0.940);transform-origin:0 0">Propriétés</div>
<svg style="left:1535px;top:485px" width="60" height="16">
 <use href="#pdrop" x="2" y="2"/><use href="#pin" x="21" y="1"/><use href="#pclose" x="41" y="2"/>
</svg>
<div class="a" style="left:1217px;top:504px;width:374px;height:27px;background:#f9f9f9"></div>
<div class="a" style="left:1217px;top:531px;width:374px;height:175px;background:#fff"></div>
<div class="a" style="left:1267.5px;top:507px;width:21px;height:21px;background:#dcdcdc;border:1px solid #bdbdbd;border-radius:3px"></div>
<div class="a" style="left:1296px;top:506px;width:292px;height:24px;background:#fff;border:1px solid #cdcdcd;border-radius:3px"></div>
<div class="t" style="left:1302px;top:511px;color:#777;transform:scaleX(0.966);transform-origin:0 0">Rechercher</div>
<svg style="left:0;top:0" width="1600" height="740">
 <text x="1225" y="518" font-family="Liberation Sans" font-size="9" fill="#3a7ec0">A</text>
 <text x="1225" y="526" font-family="Liberation Sans" font-size="9" fill="#a25ac8">Z</text>
 <path d="M1236.5 511v13M1233.5 521l3 3 3-3" fill="none" stroke="#333" stroke-width="1.1"/>
 <g fill="none" stroke="#333" stroke-width="1"><rect x="1248.5" y="510.5" width="5" height="3.5"/><rect x="1248.5" y="521.5" width="5" height="3.5"/><rect x="1258.5" y="516" width="5" height="3.5"/></g>
 <path d="M1253.5 512.5h2.5v11h-2.5M1256 517.8h2.5" fill="none" stroke="#3a7ec0" stroke-width="1"/>
 <rect x="1271.5" y="513.5" width="13" height="9" fill="none" stroke="#666" stroke-width="1"/>
 <rect x="1278" y="514" width="6" height="8" fill="#555"/>
 <path d="M1274 524l6-12" stroke="#3a7ec0" stroke-width="1.1"/>
 <circle cx="1577" cy="515.5" r="4.5" fill="none" stroke="#555" stroke-width="1.1"/>
 <path d="M1573.8 518.8l-4.5 4.5" stroke="#555" stroke-width="1.3"/>
 <path d="M1217 550.5h362M1217 569.5h362M1217 588.5h362M1217 607.5h362M1217 626.5h362M1217 645.5h362M1217 664.5h362M1217 683.5h362" stroke="#f2f2f2" stroke-width="1"/>
 <path d="M1404.5 531v158" stroke="#f0f0f0" stroke-width="1"/>
 <rect x="1236.5" y="629.5" width="167" height="17" fill="#e3e3e3" stroke="#d0d0d0" stroke-width="1"/>
 <rect x="1556.5" y="534.5" width="17" height="16" rx="3" fill="#fff" stroke="#d0d0d0" stroke-width="1"/>
 <rect x="1556.5" y="553.5" width="17" height="16" rx="3" fill="#fff" stroke="#d0d0d0" stroke-width="1"/>
 <g fill="#333"><rect x="1561" y="545" width="1.2" height="1.2"/><rect x="1564" y="545" width="1.2" height="1.2"/><rect x="1567" y="545" width="1.2" height="1.2"/><rect x="1561" y="564" width="1.2" height="1.2"/><rect x="1564" y="564" width="1.2" height="1.2"/><rect x="1567" y="564" width="1.2" height="1.2"/></g>
 <path d="M1579 545.2h9l-4.5-5z" fill="#777"/>
 <rect x="1579.5" y="658" width="8.5" height="24" rx="4.2" fill="#c8c8c8"/>
 <path d="M1579 693.7h9l-4.5 6z" fill="#777"/>
 <path d="M1224.5 691v9l4.5-4.5z" fill="none" stroke="#999" stroke-width="0.9"/>
 <!-- tabs -->
 <path d="M1217 705.5h373M1217 728.5h373" stroke="#cfcfcf" stroke-width="1"/>
 <rect x="1217.5" y="705.5" width="78.5" height="21" fill="#fff" stroke="#cfcfcf" stroke-width="1"/>
 <path d="M1224.5 709.5v5M1231.5 714v7" fill="none" stroke="#3a7ec0" stroke-width="1.2"/><rect x="1223.2" y="714.5" width="2.6" height="7" rx="1.2" fill="#3a7ec0"/><path d="M1229.5 709.5v2.5a2 2 0 0 0 4 0v-2.5" fill="none" stroke="#3a7ec0" stroke-width="1.2"/><rect x="1230.5" y="713.5" width="2" height="8" rx="1" fill="#5a9ad8"/>
 <g fill="none" stroke="#333" stroke-width="1"><rect x="1304.5" y="709.5" width="4" height="3"/><path d="M1306.5 712.5v8h3M1306.5 716h3"/><rect x="1309.5" y="714" width="5" height="3.5"/><rect x="1309.5" y="719" width="5" height="3.5"/><rect x="1309.5" y="709.5" width="5" height="3"/></g>
 <path d="M1440 713l2 -1l1 -3l1.2 6l1.2-8l1.3 9l1 -4l1.3 2" fill="none" stroke="#d9475a" stroke-width="1.1"/>
 <circle cx="1449.5" cy="717" r="2.8" fill="none" stroke="#333" stroke-width="1.1"/><path d="M1451.5 719l2.5 2.5" stroke="#333" stroke-width="1.3"/>
</svg>
<div class="t" style="left:1240px;top:536.1px;transform:scaleX(1.035);transform-origin:0 0">Nom chemin fichier</div><div class="t" style="left:1409px;top:536.1px;transform:scaleX(1.004);transform-origin:0 0">C:\Users\Public\Docume...</div><div class="t" style="left:1240px;top:555.2px;transform:scaleX(1.017);transform-origin:0 0">Format d'affichage</div><div class="t" style="left:1409px;top:555.2px">%t</div><div class="t" style="left:1240px;top:574.3px;transform:scaleX(0.953);transform-origin:0 0">Base de temps</div><div class="t" style="left:1409px;top:574.3px;transform:scaleX(0.979);transform-origin:0 0">Temps de début et fréquence...</div><div class="t" style="left:1240px;top:593.3px;transform:scaleX(0.995);transform-origin:0 0">Temps début</div><div class="t" style="left:1409px;top:593.3px;transform:scaleX(0.924);transform-origin:0 0">-00:00:00,05</div><div class="t" style="left:1240px;top:612.4px;transform:scaleX(0.977);transform-origin:0 0">Fréquence image</div><div class="t" style="left:1409px;top:612.4px;transform:scaleX(0.929);transform-origin:0 0">500</div><div class="t" style="left:1240px;top:631.5px;transform:scaleX(1.014);transform-origin:0 0">Volume</div><div class="t" style="left:1409px;top:631.5px;transform:scaleX(0.920);transform-origin:0 0">100 %</div><div class="t" style="left:1240px;top:650.6px;transform:scaleX(1.012);transform-origin:0 0">Position</div><div class="t" style="left:1409px;top:650.6px;transform:scaleX(0.908);transform-origin:0 0">00:00:00</div><div class="t" style="left:1240px;top:669.7px;transform:scaleX(1.011);transform-origin:0 0">Numéro de trame</div><div class="t" style="left:1409px;top:669.7px">26</div><div class="t" style="left:1240px;top:688.8px;font-weight:bold;transform:scaleX(0.963);transform-origin:0 0">Propriétés du curseur</div>
<div class="t" style="left:1239px;top:708px;transform:scaleX(0.940);transform-origin:0 0">Propriétés</div>
<div class="t" style="left:1320px;top:708px;transform:scaleX(0.954);transform-origin:0 0">Hiérarchie des objets</div>
<div class="t" style="left:1457px;top:708px;transform:scaleX(0.951);transform-origin:0 0">Aperçu des données</div>
<div class="a" style="left:1457px;top:721px;width:7px;height:1px;background:#333"></div>

<!-- Aperçu -->
<div class="t" style="left:1221px;top:743px;transform:scaleX(0.952);transform-origin:0 0">Aperçu</div>
<svg style="left:1535px;top:743px" width="60" height="16">
 <use href="#pdrop" x="2" y="2"/><use href="#pin" x="21" y="1"/><use href="#pclose" x="41" y="2"/>
</svg>
<div class="a" style="left:1304px;top:782px;width:200px;height:150px;background:#fff"></div>
<svg style="left:1312px;top:786px" width="185" height="142" viewBox="361 277 491 378" preserveAspectRatio="none"><use href="#photo"/></svg>
<svg style="left:0;top:930px" width="1600" height="70">
 <path d="M1217 23.5h373M1217 46.5h373" stroke="#cfcfcf" stroke-width="1"/>
 <rect x="1217.5" y="23.5" width="63" height="21" fill="#fff" stroke="#cfcfcf" stroke-width="1"/>
 <rect x="1222.5" y="26.5" width="11" height="10" fill="#fff" stroke="#333" stroke-width="1"/>
 <rect x="1222.5" y="26.5" width="11" height="2" fill="#555"/>
 <path d="M1224 32h8M1228 29.5l1.8 2.5-1.8 2.5-1.8-2.5z" stroke="#d9475a" fill="#d9475a" stroke-width="1"/>
 <path d="M1290 36c-1.5-1.5-2.5-3-2.5-5a4.2 4.2 0 0 1 8.4 0c0 2-1 3.5-2.5 5v2.5h-3.4z" fill="none" stroke="#e08a4a" stroke-width="1"/>
 <path d="M1290.5 40h2.4" stroke="#e08a4a" stroke-width="1"/>
 <rect x="1399.5" y="26.5" width="11" height="10" fill="none" stroke="#3a6ea8" stroke-width="1"/>
 <path d="M1399.5 29.5h11M1403.5 29.5v7" stroke="#3a6ea8" stroke-width="1"/>
</svg>
<div class="t" style="left:1239px;top:957px;transform:scaleX(0.952);transform-origin:0 0">Aperçu</div>
<div class="t" style="left:1304px;top:957px;transform:scaleX(0.964);transform-origin:0 0">Aide dynamique</div>
<div class="t" style="left:1416px;top:957px;transform:scaleX(0.969);transform-origin:0 0">Coordonnées</div>


<!-- BOTTOM PANELS -->

<!-- Dossiers -->
<div class="t" style="left:12px;top:751px;transform:scaleX(0.921);transform-origin:0 0">Dossiers</div>
<svg style="left:421px;top:751px" width="56" height="16">
 <use href="#pdrop" x="2" y="1"/><use href="#pin" x="22" y="1"/><use href="#pclose" x="41" y="1.5"/>
</svg>
<div class="a" style="left:9px;top:770px;width:469px;height:22px;background:#f9f9f9"></div>
<div class="a" style="left:9px;top:792px;width:469px;height:184px;background:#fdfdfd"></div>
<div class="a" style="left:18px;top:772px;width:375px;height:20px;background:#fff;border:1px solid #cdcdcd;border-radius:4px"></div>
<div class="t" style="left:22px;top:775px;transform:scaleX(0.923);transform-origin:0 0">(Pas de sous-dossier activé)</div>
<div class="a" style="left:9px;top:795px;width:268px;height:17px;background:#d9d9d9"></div>
<div class="t" style="left:32px;top:796px;transform:scaleX(0.950);transform-origin:0 0">BaseDonnéesProjet: 'Base de données projet1'</div>
<svg style="left:0;top:740px" width="480" height="80">
 <path d="M382.5 41.5l3.1 3 3.1-3" fill="none" stroke="#555" stroke-width="1.1"/>
 <g fill="#e4e4e4" stroke="#c4c4c4" stroke-width="0.9">
  <path d="M405.5 37.5h4l1.5 1.5h7.5v10h-13z"/>
  <path d="M430.5 37.5h4l1.5 1.5h7.5v10h-13z"/>
  <path d="M456.5 37.5h4l1.5 1.5h7.5v10h-13z"/>
 </g>
 <path d="M416 48h-8M410 46l-2 2 2 2M433 48h9M440 46l2 2-2 2" fill="none" stroke="#bbb" stroke-width="0.9"/>
 <g fill="none" stroke="#e08a4a" stroke-width="1.1">
  <ellipse cx="19" cy="58" rx="5.5" ry="2"/>
  <path d="M13.5 58v9.5c0 1.1 2.5 2 5.5 2s5.5-0.9 5.5-2V58M13.5 61.3c0 1.1 2.5 2 5.5 2s5.5-0.9 5.5-2M13.5 64.5c0 1.1 2.5 2 5.5 2s5.5-0.9 5.5-2"/>
 </g>
</svg>
<div class="a" style="left:478px;top:746px;width:1px;height:231px;background:#c8c8c8"></div>

<!-- Liste des objets -->
<div class="t" style="left:493px;top:751px;transform:scaleX(0.947);transform-origin:0 0">Liste des objets</div>
<svg style="left:1149.5px;top:751px" width="56" height="16">
 <use href="#pdrop" x="2" y="1"/><use href="#pin" x="22" y="1"/><use href="#pclose" x="41" y="1.5"/>
</svg>
<div class="a" style="left:489px;top:770px;width:716px;height:25px;background:#f9f9f9"></div>
<div class="a" style="left:491px;top:772px;width:25px;height:20px;background:#e2e2e2;border:1px solid #d2d2d2;border-radius:4px"></div>
<div class="a" style="left:640px;top:772px;width:564px;height:19px;background:#fff;border:1px solid #cdcdcd;border-radius:4px"></div>
<div class="t" style="left:665px;top:774px;transform:scaleX(0.950);transform-origin:0 0">BaseDonnéesProjet: 'Base de données projet1'</div>
<div class="a" style="left:489px;top:795px;width:716px;height:23px;background:#f9f9f9;border-top:1px solid #d8d8d8;border-bottom:1px solid #c8c8c8;border-left:1px solid #d8d8d8"></div>
<div class="a" style="left:489px;top:818px;width:716px;height:140px;background:#fdfdfd"></div>
<div class="a" style="left:509px;top:837px;width:60px;height:19px;background:#ececec"></div>
<svg style="left:0;top:740px" width="1210" height="240">
 <path d="M496 46v-8h6l1.5 1.5h8v6.5M496 46l3-5h13l-3 5z" fill="#eee" stroke="#c4c4c4" stroke-width="0.9"/>
 <path d="M522 37l6.5 4 6.5-4M522 41.5l6.5 4 6.5-4M522 46l6.5 4 6.5-4" fill="none" stroke="#b5b5b5" stroke-width="1"/>
 <path d="M545.5 37v16" stroke="#d8d8d8"/>
 <path d="M568 44.5h-13M559.5 40l-4.5 4.5 4.5 4.5M579 44.5h13M587.5 40l4.5 4.5-4.5 4.5M626.5 52v-15M621.5 42l5-5 5 5" fill="none" stroke="#aaa" stroke-width="1.2"/>
 <path d="M603.5 42l3.5 3.5 3.5-3.5" fill="none" stroke="#222" stroke-width="1.4"/>
 <g fill="none" stroke="#e08a4a" stroke-width="1.1">
  <ellipse cx="650" cy="38" rx="5.5" ry="2"/>
  <path d="M644.5 38v9.5c0 1.1 2.5 2 5.5 2s5.5-0.9 5.5-2V38M644.5 41.3c0 1.1 2.5 2 5.5 2s5.5-0.9 5.5-2M644.5 44.5c0 1.1 2.5 2 5.5 2s5.5-0.9 5.5-2"/>
 </g>
 <path d="M733.5 56v21M821.5 56v21M846.5 56v21M986.5 56v21M1196.5 56v21" stroke="#d0d0d0"/>
 <path d="M493 86.5h2.5l1-2 1 4 1-6 1 8 1-10 1 11 1-9 1 7 1-4 1 2 1-1h2" fill="none" stroke="#d9334a" stroke-width="1.3"/>
 <use href="#film" x="493" y="100"/>
 <use href="#film" x="493" y="119"/>
 <rect x="489" y="218" width="716" height="16" fill="#f4f4f4"/>
 <path d="M501.2 222v11l-6.5-5.5z" fill="#666"/>
 <rect x="506" y="222.9" width="479" height="9.3" rx="4.6" fill="#c8c8c8"/>
 <path d="M1193 222v11l6.5-5.5z" fill="#666"/>
</svg>
<div class="a" style="left:1197px;top:818px;width:8px;height:140px;overflow:hidden"><div class="t" style="left:4px;top:3px">S</div><div class="t" style="left:4px;top:22px">C</div><div class="t" style="left:4px;top:41px">C</div></div>
<div class="t" style="left:493px;top:799px;transform:scaleX(0.951);transform-origin:0 0">Nom</div>
<div class="t" style="left:738px;top:799px;transform:scaleX(1.003);transform-origin:0 0">Unité</div>
<div class="t" style="left:826px;top:799px;transform:scaleX(0.894);transform-origin:0 0">C...</div>
<div class="t" style="left:851px;top:799px;transform:scaleX(0.896);transform-origin:0 0">Type</div>
<div class="t" style="left:992px;top:799px;transform:scaleX(1.007);transform-origin:0 0">Modifié le</div>
<div class="a" style="left:1197px;top:795px;width:8px;height:22px;overflow:hidden"><div class="t" style="left:4px;top:4px">C</div></div>
<div class="t" style="left:510px;top:821px;transform:scaleX(1.002);transform-origin:0 0">Acceleration</div>
<div class="t" style="left:740px;top:821px">G</div>
<div class="t" style="left:853px;top:821px;transform:scaleX(0.970);transform-origin:0 0">Données</div>
<div class="t" style="left:993px;top:821px;transform:scaleX(0.941);transform-origin:0 0">30/04/2025 16:05:30</div>
<div class="t" style="left:510px;top:840px;transform:scaleX(0.985);transform-origin:0 0">Front View</div>
<div class="t" style="left:853px;top:840px;transform:scaleX(1.013);transform-origin:0 0">Média</div>
<div class="t" style="left:993px;top:840px;transform:scaleX(0.941);transform-origin:0 0">30/04/2025 16:26:45</div>
<div class="t" style="left:510px;top:859px;transform:scaleX(0.948);transform-origin:0 0">Side View</div>
<div class="t" style="left:853px;top:859px;transform:scaleX(1.013);transform-origin:0 0">Média</div>
<div class="t" style="left:993px;top:859px;transform:scaleX(0.941);transform-origin:0 0">30/04/2025 16:17:36</div>


<!-- STATUS BAR -->

<div class="a" style="left:1px;top:976px;width:1591px;height:1px;background:#cfcfcf"></div>
<div class="a" style="left:1px;top:977px;width:1598px;height:22px;background:#f8f8f8"></div>
<div class="t" style="left:17px;top:980px;transform:scaleX(0.931);transform-origin:0 0">Prêt</div>
<div class="t" style="left:1415px;top:981px;transform:scaleX(0.887);transform-origin:0 0">13 cm x 10 cm</div>
<svg style="left:0;top:970px" width="1600" height="30">
 <rect x="1388.5" y="14.5" width="11" height="9" fill="#fff" stroke="#555" stroke-width="1"/>
 <path d="M1388.5 17h11" stroke="#555"/>
 <g fill="#777"><rect x="1390" y="19" width="1.5" height="1.5"/><rect x="1393" y="19" width="1.5" height="1.5"/><rect x="1396" y="19" width="1.5" height="1.5"/><rect x="1390" y="21.5" width="1.5" height="1.5"/><rect x="1393" y="21.5" width="1.5" height="1.5"/><rect x="1396" y="21.5" width="1.5" height="1.5"/></g>
 <circle cx="1390" cy="13" r="2.2" fill="#555"/>
 <path d="M1555 22.5c1.5-1.5 1.5-4 1.5-6a4.5 4.5 0 0 1 9 0c0 2 0 4.5 1.5 6z" fill="#fff" stroke="#444" stroke-width="1"/>
 <path d="M1559.5 23.5a1.5 1.5 0 0 0 3 0" fill="none" stroke="#444"/>
 <g fill="#999"><rect x="1586" y="16" width="2" height="2"/><rect x="1583" y="19" width="2" height="2"/><rect x="1586" y="19" width="2" height="2"/><rect x="1580" y="22" width="2" height="2"/><rect x="1583" y="22" width="2" height="2"/><rect x="1586" y="22" width="2" height="2"/></g>
</svg>

</body></html>
